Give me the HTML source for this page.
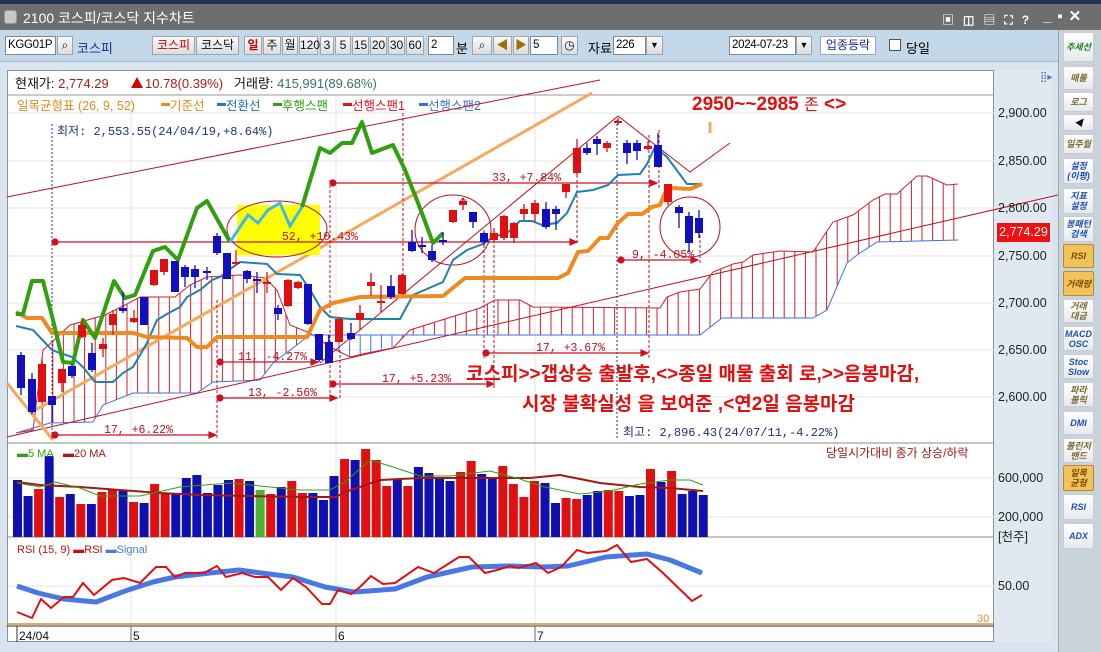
<!DOCTYPE html>
<html><head><meta charset="utf-8">
<style>
*{margin:0;padding:0;box-sizing:border-box}
body{width:1101px;height:652px;overflow:hidden;background:#d9e4ee;font-family:"Liberation Sans","Noto Sans CJK KR",sans-serif;font-size:12px;position:relative}
.abs{position:absolute}
.tb{position:absolute;top:0;left:0;width:1101px;height:30px;background:#6e6e6e;border-top:4px solid #1e3550}
.tool{position:absolute;top:30px;left:0;width:1058px;height:32px;background:#c3d9ea;border-bottom:1px solid #a8bfd2}
.btn{position:absolute;top:36px;height:19px;background:linear-gradient(#fafafa,#dcdcdc);border:1px solid #9aa6b2;font-size:12px;text-align:center;line-height:17px;color:#111}
.inp{position:absolute;top:36px;height:19px;background:#fff;border:1px solid #7f8a96;font-size:11.5px;line-height:17px;padding-left:2px;white-space:nowrap;overflow:hidden;letter-spacing:-0.3px}
.side{position:absolute;left:1058px;top:30px;width:43px;height:622px;background:#c9d3dc;border-left:1px solid #9aa}
.sb{position:absolute;left:1063px;width:31px;background:linear-gradient(#fff,#e6e9ee);border:1px solid #c8ccd2;border-radius:2px;font-size:9px;font-weight:bold;font-style:italic;text-align:center;color:#2050b0;line-height:10px;display:flex;align-items:center;justify-content:center}
.sb.o{background:#f2c35a;border-color:#b88a30;color:#7a4a00}
.sb.g{color:#7a6a30}
.ax{position:absolute;left:998px;font-size:12.5px;color:#222}
</style></head><body>
<div class="tb">
 <div class="abs" style="left:4px;top:6px;width:13px;height:14px;background:#c8c8c8;border-radius:3px;border:1px solid #999"></div>
 <div class="abs" style="left:23px;top:4px;color:#fff;font-size:14px">2100 코스피/코스닥 지수차트</div>
 <div class="abs" style="left:942px;top:7px;color:#fff;font-size:12px;letter-spacing:9px;font-weight:bold">▣◫▤⛶?</div>
 <div class="abs" style="left:1043px;top:3px;color:#fff;font-size:15px;font-weight:bold;letter-spacing:6px">_▪✕</div>
</div>
<div class="tool"></div>
<div class="inp" style="left:5px;width:51px">KGG01P</div>
<div class="btn" style="left:57px;width:16px">⌕</div>
<div class="abs" style="left:77px;top:38px;color:#1a2a90;font-size:13px">코스피</div>
<div class="btn" style="left:152px;width:43px;color:#c00">코스피</div>
<div class="btn" style="left:196px;width:43px">코스닥</div>
<div class="btn" style="left:244px;width:18px;color:#c00;font-weight:bold">일</div>
<div class="btn" style="left:263px;width:18px">주</div>
<div class="btn" style="left:282px;width:16px">월</div>
<div class="btn" style="left:299px;width:19px">120</div>
<div class="btn" style="left:320px;width:14px">3</div>
<div class="btn" style="left:335px;width:16px">5</div>
<div class="btn" style="left:352px;width:17px">15</div>
<div class="btn" style="left:370px;width:17px">20</div>
<div class="btn" style="left:388px;width:17px">30</div>
<div class="btn" style="left:406px;width:18px">60</div>
<div class="inp" style="left:428px;width:26px">2</div>
<div class="abs" style="left:456px;top:38px;font-size:13px">분</div>
<div class="btn" style="left:472px;width:20px">⌕</div>
<div class="btn" style="left:493px;width:19px;color:#a07000">◀</div>
<div class="btn" style="left:513px;width:16px;color:#a07000">▶</div>
<div class="inp" style="left:530px;width:28px">5</div>
<div class="btn" style="left:561px;width:17px">◷</div>
<div class="abs" style="left:588px;top:38px;font-size:13px">자료</div>
<div class="inp" style="left:613px;width:33px">226</div>
<div class="btn" style="left:646px;width:17px;font-size:9px">▼</div>
<div class="inp" style="left:729px;width:67px">2024-07-23</div>
<div class="btn" style="left:796px;width:16px;font-size:9px">▼</div>
<div class="btn" style="left:820px;width:56px;color:#1a2a90;background:#fff">업종등락</div>
<div class="abs" style="left:889px;top:39px;width:12px;height:12px;background:#fff;border:1px solid #555"></div>
<div class="abs" style="left:906px;top:38px;font-size:13px">당일</div>

<div class="abs" style="left:7px;top:70px;width:987px;height:572px;background:#fff;border:1px solid #8a949e"></div>
<div class="abs" style="left:994px;top:70px;width:58px;height:572px;background:#e0e8f0"></div>

<svg class="abs" style="left:0;top:0" width="1058" height="652" id="ch" font-family="Liberation Sans, Noto Sans CJK KR, sans-serif">
 <line x1="7" y1="95" x2="994" y2="95" stroke="#999"/>
 <g stroke="#e6e6e6">
  <line x1="8" y1="113" x2="994" y2="113"/><line x1="8" y1="161" x2="994" y2="161"/><line x1="8" y1="208" x2="994" y2="208"/><line x1="8" y1="256" x2="994" y2="256"/><line x1="8" y1="303" x2="994" y2="303"/><line x1="8" y1="350" x2="994" y2="350"/><line x1="8" y1="397" x2="994" y2="397"/>
  <line x1="8" y1="478" x2="994" y2="478"/><line x1="8" y1="517" x2="994" y2="517"/><line x1="8" y1="586" x2="994" y2="586"/>
  <line x1="131" y1="96" x2="131" y2="624"/><line x1="336" y1="96" x2="336" y2="624"/><line x1="535" y1="96" x2="535" y2="624"/>
 </g>
 <line x1="7" y1="443" x2="994" y2="443" stroke="#888"/>
 <line x1="7" y1="537" x2="994" y2="537" stroke="#888"/>
 <line x1="7" y1="624" x2="994" y2="624" stroke="#d89030" stroke-width="1.5"/>
 <line x1="7" y1="626" x2="994" y2="626" stroke="#333"/>
 <line x1="17" y1="626" x2="17" y2="642" stroke="#333"/>
 <g font-size="12" fill="#111"><text x="19" y="640">24/04</text><text x="133" y="640">5</text><text x="338" y="640">6</text><text x="537" y="640">7</text></g>
 <line x1="131" y1="626" x2="131" y2="642" stroke="#666"/><line x1="336" y1="626" x2="336" y2="642" stroke="#666"/><line x1="535" y1="626" x2="535" y2="642" stroke="#666"/>

 <text x="15" y="88" font-size="13" fill="#111">현재가: <tspan fill="#b01818">2,774.29</tspan></text>
 <path d="M131 88 L137 77 L143 88Z" fill="#d00"/>
 <text x="145" y="88" font-size="13" fill="#b01818">10.78(0.39%)</text>
 <text x="234" y="88" font-size="13" fill="#111">거래량: <tspan fill="#3a7070">415,991(89.68%)</tspan></text>
 <g font-size="12.5">
  <text x="17" y="110" fill="#e08a20">일목균형표 (26, 9, 52)</text>
  <rect x="161" y="103" width="9" height="3" fill="#f08a20"/><text x="170" y="110" fill="#e08a20">기준선</text>
  <rect x="217" y="103" width="9" height="3" fill="#2080b0"/><text x="226" y="110" fill="#2070a0">전환선</text>
  <rect x="273" y="103" width="9" height="3" fill="#30a010"/><text x="282" y="110" fill="#30a010">후행스팬</text>
  <rect x="343" y="103" width="9" height="3" fill="#e01020"/><text x="352" y="110" fill="#e01020">선행스팬1</text>
  <rect x="419" y="103" width="9" height="3" fill="#4070e0"/><text x="428" y="110" fill="#4070e0">선행스팬2</text>
 </g>
 <text x="1040" y="80" font-size="10" fill="#4070d0">⣿▸</text>

 <g id="cloud" stroke="#d02030" stroke-width="1"></g>
 <polyline fill="none" stroke="#d02030" stroke-width="1" points="16,433 33,430 43,350 52,342 70,325 105,315 125,305 140,297 175,297 190,285 207,277 240,275 265,278 277,290 290,325 310,333 330,347 350,357 367,353 393,348 410,330 480,308 495,300 520,300 533,307 660,308 667,297 680,292 700,289 713,272 733,264 743,262 753,255 780,251 813,252 833,222 853,215 873,200 885,194 897,194 917,176 927,176 947,185 958,184"/>
 <polyline fill="none" stroke="#4070e0" stroke-width="1" points="16,433 50,423 93,422 103,405 133,393 197,393 213,382 260,380 273,363 310,335 407,335 665,335 700,335 722,318 813,318 827,310 847,263 857,255 877,242 958,240"/>

 <line x1="7" y1="197" x2="600" y2="80" stroke="#c01020" stroke-width="1"/>
 <line x1="7" y1="437" x2="1058" y2="195" stroke="#c01020" stroke-width="1"/>
 <line x1="32" y1="412" x2="592" y2="93" stroke="#f5a860" stroke-width="3"/>
 <line x1="7" y1="383" x2="53" y2="440" stroke="#f5a860" stroke-width="3"/>
 <line x1="710" y1="122" x2="710" y2="133" stroke="#f5a860" stroke-width="3"/>
 <polyline fill="none" stroke="#c01020" stroke-width="1" points="320,363 618,116 690,172 730,143"/>

 <rect x="237" y="205" width="83" height="50" fill="#ffff00"/>
 <ellipse cx="277" cy="229" rx="50" ry="28" fill="none" stroke="#c01020"/>
 <ellipse cx="453" cy="230" rx="38" ry="35" fill="none" stroke="#c01020"/>
 <circle cx="690" cy="227" r="30" fill="none" stroke="#c01020"/>

 <g stroke="#c01020" stroke-dasharray="3,2" stroke-width="1">
  <line x1="217" y1="300" x2="217" y2="440"/><line x1="330" y1="180" x2="330" y2="400"/><line x1="340" y1="350" x2="340" y2="400"/>
  <line x1="403" y1="113" x2="403" y2="280"/><line x1="484" y1="230" x2="484" y2="358"/><line x1="494" y1="230" x2="494" y2="390"/>
  <line x1="577" y1="175" x2="577" y2="245"/><line x1="649" y1="135" x2="649" y2="358"/><line x1="659" y1="130" x2="659" y2="188"/><line x1="700" y1="230" x2="700" y2="265"/>
 </g>
 <g stroke="#203080" stroke-dasharray="2,2"><line x1="52" y1="124" x2="52" y2="440"/><line x1="617" y1="120" x2="617" y2="440"/></g>

 <g stroke="#d01020" stroke-width="1.2" fill="#d01020" font-size="11.5">
  <line x1="55" y1="242" x2="575" y2="242"/><circle cx="55" cy="242" r="3"/><path d="M577 242 l-7 -3 v6z"/>
  <line x1="333" y1="183" x2="655" y2="183"/><circle cx="333" cy="183" r="3"/><path d="M657 183 l-7 -3 v6z"/>
  <line x1="220" y1="362" x2="316" y2="362"/><circle cx="220" cy="362" r="3"/><path d="M318 362 l-7 -3 v6z"/>
  <line x1="220" y1="398" x2="335" y2="398"/><circle cx="220" cy="398" r="3"/><path d="M337 398 l-7 -3 v6z"/>
  <line x1="333" y1="384" x2="492" y2="384"/><circle cx="333" cy="384" r="3"/><path d="M494 384 l-7 -3 v6z"/>
  <line x1="55" y1="435" x2="214" y2="435"/><circle cx="55" cy="435" r="3"/><path d="M216 435 l-7 -3 v6z"/>
  <line x1="486" y1="353" x2="646" y2="353"/><circle cx="486" cy="353" r="3"/><path d="M648 353 l-7 -3 v6z"/>
  <line x1="621" y1="260" x2="696" y2="260"/><circle cx="621" cy="260" r="3"/><path d="M698 260 l-7 -3 v6z"/>
 </g>
 <g font-size="11.5" fill="#c01020" font-family="Liberation Mono, monospace">
  <text x="282" y="240">52, +10.43%</text><text x="492" y="181">33, +7.84%</text><text x="238" y="360">11, -4.27%</text>
  <text x="248" y="396">13, -2.56%</text><text x="382" y="382">17, +5.23%</text><text x="104" y="433">17, +6.22%</text>
  <text x="536" y="351">17, +3.67%</text><text x="632" y="258">9, -4.05%</text>
 </g>
 <text x="57" y="135" font-size="12" fill="#203080" font-family="Liberation Mono, Noto Sans CJK KR, monospace">최저: 2,553.55(24/04/19,+8.64%)</text>
 <text x="623" y="436" font-size="12" fill="#203080" font-family="Liberation Mono, Noto Sans CJK KR, monospace">최고: 2,896.43(24/07/11,-4.22%)</text>

 <polyline fill="none" stroke="#2080b0" stroke-width="2" points="16,326 33,330 52,350 60,353 72,357 83,367 95,382 113,382 123,373 133,367 147,343 157,320 167,314 180,307 187,297 200,290 212,280 220,277 233,267 240,262 267,264 277,274 300,275 312,293 320,307 330,317 350,319 400,319 413,295 443,282 453,260 467,250 483,244 493,237 507,233 520,221 532,221 542,225 557,223 567,213 577,192 593,190 608,185 618,175 640,174 647,164 655,147 667,157 687,184 702,184"/>
 <polyline fill="none" stroke="#f08a20" stroke-width="4" points="16,312 27,318 42,318 52,333 133,333 147,337 187,338 197,347 207,347 217,337 307,337 320,310 333,303 360,297 443,296 465,278 558,278 568,273 578,252 588,251 600,238 608,238 618,223 628,214 642,214 652,207 660,205 665,193 673,188 690,189 702,184"/>
 <polyline fill="none" stroke="#30a010" stroke-width="4" stroke-linejoin="round" points="16,314 23,314 32,281 43,281 53,320 63,362 73,363 83,320 95,338 114,281 125,298 135,295 153,251 165,247 178,260 197,208 207,201 230,242"/>
 <polyline fill="none" stroke="#40b8e8" stroke-width="3" points="230,242 248,215 258,223 268,210 280,203 290,226 302,207"/>
 <polyline fill="none" stroke="#30a010" stroke-width="4" stroke-linejoin="round" points="302,207 320,148 330,153 342,143 352,143 362,122 372,153 393,145 405,170 420,208 433,243 443,233"/>

 <g id="candles"></g>
 <path d="M459 203 l4 -5 l4 5" fill="none" stroke="#c01020"/>

 <text x="692" y="110" font-size="19" font-weight="bold" fill="#e01010">2950~~2985 <tspan font-weight="normal" font-size="16">존</tspan> &lt;&gt;</text>
 <text x="466" y="380" font-size="19" font-weight="bold" fill="#e01010">코스피&gt;&gt;갭상승 출발후,&lt;&gt;종일 매물 출회 로,&gt;&gt;음봉마감,</text>
 <text x="522" y="410" font-size="19" font-weight="bold" fill="#e01010">시장 불확실성 을 보여준 ,&lt;연2일 음봉마감</text>

 <g id="vol"></g>
 <polyline fill="none" stroke="#a01818" stroke-width="2" points="17,482 40,485 80,487 120,490 160,493 200,495 250,496 300,497 336,497 345,492 380,480 420,478 470,478 530,478 560,475 580,479 600,483 640,487 670,488 703,491"/>
 <polyline fill="none" stroke="#30a010" stroke-width="1" points="17,483 40,487 55,482 80,488 100,496 140,496 180,487 230,483 260,486 300,490 330,490 345,482 370,460 390,466 420,476 450,476 490,471 520,479 540,486 580,494 610,491 640,484 670,480 690,480 703,485"/>
 <text x="17" y="457" font-size="11" fill="#30a010">▬5 MA</text><text x="63" y="457" font-size="11" fill="#a01818">▬20 MA</text>
 <text x="826" y="457" font-size="12" fill="#a01818">당일시가대비 종가 상승/하락</text>

 <polyline fill="none" stroke="#4878e8" stroke-width="5" stroke-linejoin="round" points="17,586 38,593 64,599 96,602 128,590 153,582 175,577 210,573 239,570 261,573 293,577 325,587 354,592 395,589 427,577 472,567 510,566 542,567 568,566 606,557 647,554 670,560 702,573"/>
 <polyline fill="none" stroke="#e01010" stroke-width="2" points="17,612 32,618 41,599 51,608 64,597 73,597 83,583 94,595 112,580 124,578 140,583 156,567 166,567 175,577 185,573 204,573 217,566 226,577 242,573 255,577 268,577 281,590 293,578 306,587 322,604 330,604 338,590 351,594 360,587 371,576 383,584 395,583 418,567 434,573 459,557 469,557 485,573 497,570 510,566 518,568 536,563 548,573 561,567 577,550 587,553 606,551 617,545 631,562 647,559 663,573 692,601 702,595"/>
 <text x="17" y="553" font-size="11" fill="#c01010">RSI (15, 9) <tspan>▬RSI</tspan> <tspan fill="#4878e8">▬Signal</tspan></text>
 <text x="977" y="622" font-size="11" fill="#e09030">30</text>
</svg>

<div class="ax" style="top:106px">2,900.00</div>
<div class="ax" style="top:154px">2,850.00</div>
<div class="ax" style="top:201px">2,800.00</div>
<div class="abs" style="left:997px;top:223px;width:53px;height:19px;background:#f01010;color:#fff;font-size:12.5px;line-height:19px;text-align:center">2,774.29</div>
<div class="ax" style="top:249px">2,750.00</div>
<div class="ax" style="top:296px">2,700.00</div>
<div class="ax" style="top:343px">2,650.00</div>
<div class="ax" style="top:390px">2,600.00</div>
<div class="ax" style="top:471px">600,000</div>
<div class="ax" style="top:510px">200,000</div>
<div class="ax" style="top:526px">[천주]</div>
<div class="ax" style="top:579px">50.00</div>

<div class="side"></div>
<div class="sb" style="top:32px;height:30px;color:#208020;font-size:9px">추세선</div>
<div class="sb g" style="top:66px;height:24px">매물</div>
<div class="sb g" style="top:92px;height:20px">로그</div>
<div class="sb" style="top:114px;height:17px;color:#111">◀</div>
<div class="sb g" style="top:134px;height:20px">일주월</div>
<div class="sb" style="top:158px;height:26px">설정<br>(이평)</div>
<div class="sb" style="top:188px;height:26px">지표<br>설정</div>
<div class="sb" style="top:216px;height:26px">봉패턴<br>검색</div>
<div class="sb o" style="top:244px;height:24px">RSI</div>
<div class="sb o" style="top:271px;height:25px">거래량</div>
<div class="sb g" style="top:299px;height:24px">거래<br>대금</div>
<div class="sb" style="top:326px;height:25px">MACD<br>OSC</div>
<div class="sb" style="top:354px;height:25px">Stoc<br>Slow</div>
<div class="sb g" style="top:382px;height:25px">파라<br>볼릭</div>
<div class="sb" style="top:411px;height:24px">DMI</div>
<div class="sb g" style="top:438px;height:25px">볼린저<br>밴드</div>
<div class="sb o" style="top:465px;height:26px">일목<br>균형</div>
<div class="sb" style="top:494px;height:26px">RSI</div>
<div class="sb" style="top:523px;height:26px">ADX</div>

<script>
var NS="http://www.w3.org/2000/svg";
function el(p,t,a){var e=document.createElementNS(NS,t);for(var k in a)e.setAttribute(k,a[k]);p.appendChild(e);return e;}
var C=[[21,355,388,352,395,0],[32,379,412,373,414,0],[42,364,402,362,403,1],[52,396,405,396,423,0],[62,369,383,369,392,1],[72,366,376,364,378,0],[82,325,337,320,338,1],[92,353,370,343,372,0],[103,344,349,338,357,1],[113,314,325,310,335,1],[123,308,311,292,313,0],[134,318,322,310,323,1],[144,297,325,297,325,0],[154,270,285,270,286,1],[164,259,272,259,275,1],[175,261,292,261,292,0],[185,267,277,265,287,0],[195,269,277,265,288,0],[207,271,273,267,280,0],[217,236,253,233,255,0],[227,253,279,253,279,0],[236,262,264,250,265,1],[247,271,279,270,283,0],[257,279,281,272,293,0],[267,282,284,272,293,1],[278,308,314,305,320,0],[288,280,306,279,307,1],[298,282,288,281,289,1],[308,284,324,284,325,0],[319,334,360,334,362,0],[329,342,363,335,363,0],[339,319,342,317,343,1],[351,333,339,323,340,0],[360,313,320,305,330,1],[371,282,286,273,296,1],[381,301,303,285,312,1],[391,286,297,275,299,0],[402,275,294,274,294,1],[412,242,251,230,252,0],[422,245,247,237,253,0],[432,251,260,245,262,0],[443,240,242,232,245,0],[453,210,222,210,223,1],[463,201,205,198,210,1],[473,212,222,212,228,0],[484,233,242,232,245,0],[494,233,240,228,242,1],[504,216,238,215,240,1],[514,223,238,222,243,1],[524,209,214,204,220,1],[535,203,214,200,222,1],[546,209,227,202,229,0],[556,209,214,206,230,0],[566,184,192,184,198,1],[577,148,173,139,175,1],[587,148,153,143,155,0],[597,139,144,136,155,0],[607,143,148,141,152,1],[618,121,123,118,125,1],[627,143,153,140,164,0],[637,143,151,140,160,0],[648,146,149,141,150,1],[658,145,167,133,167,0],[668,184,202,184,205,1],[679,207,213,205,228,0],[689,216,243,212,252,0],[699,218,233,210,238,0]];
var g=document.getElementById("candles");
C.forEach(function(c){var col=c[5]?"#e01010":"#1010c0";el(g,"line",{x1:c[0],x2:c[0],y1:c[3],y2:c[4],stroke:col,"stroke-width":1.3});el(g,"rect",{x:c[0]-4,y:c[1],width:8,height:Math.max(2,c[2]-c[1]),fill:col});});
var V="B480 B496 R489 B456 R497 B494 R504 B504 R492 R490 B491 R502 B503 R484 R493 B493 B478 B475 B493 B485 B480 R479 B481 G490 R494 B487 R481 R493 B493 B500 B476 R459 B460 R449 R460 R486 B480 R486 B467 B473 B478 B481 R472 R461 B474 B478 R466 R484 R497 R481 B483 B503 R498 R499 B495 B491 R490 R491 B496 B495 R469 B482 R471 B494 B491 B495".split(" ");
var vg=document.getElementById("vol");
V.forEach(function(v,i){var col={B:"#1010b0",R:"#e01010",G:"#50b030"}[v[0]];var t=+v.slice(1);el(vg,"rect",{x:13+i*10.55,y:t,width:9,height:537-t,fill:col});});
var cg=document.getElementById("cloud");
var top1=[[16,433],[33,430],[43,350],[52,342],[70,325],[105,315],[125,305],[140,297],[175,297],[190,285],[207,277],[240,275],[265,278],[277,290],[290,325],[310,333],[330,347],[350,357],[367,353],[393,348],[410,330],[480,308],[495,300],[520,300],[533,307],[660,308],[667,297],[680,292],[700,289],[713,272],[733,264],[743,262],[753,255],[780,251],[813,252],[833,222],[853,215],[873,200],[885,194],[897,194],[917,176],[927,176],[947,185],[958,184]];
var bot=[[16,433],[50,423],[93,422],[103,405],[133,393],[197,393],[213,382],[260,380],[273,363],[310,335],[407,335],[665,335],[700,335],[722,318],[813,318],[827,310],[847,263],[857,255],[877,242],[958,240]];
function interp(a,x){for(var i=0;i<a.length-1;i++){if(x>=a[i][0]&&x<=a[i+1][0]){var f=(x-a[i][0])/(a[i+1][0]-a[i][0]);return a[i][1]+f*(a[i+1][1]-a[i][1]);}}return null;}
for(var x=21;x<=958;x+=10.6){var a=interp(top1,x),b=interp(bot,x);if(a==null||b==null)continue;var blue=(x>312&&x<408);el(cg,"line",{x1:x,x2:x,y1:a,y2:b,stroke:blue?"#4070e0":"#d02030"});}
</script>
</body></html>
